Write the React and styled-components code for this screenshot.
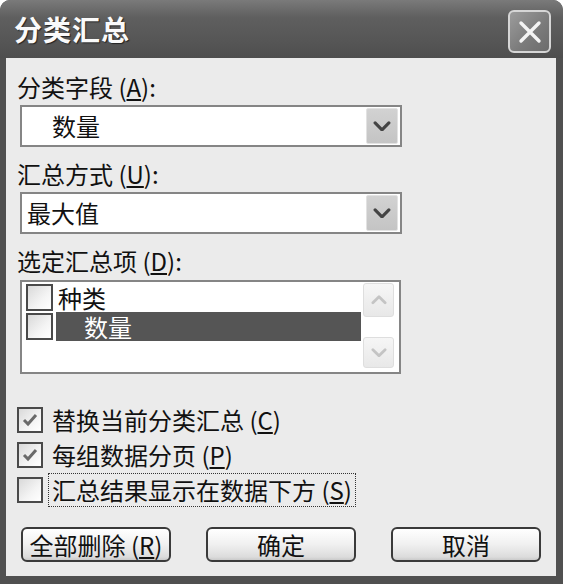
import React from 'react';
import styled, { createGlobalStyle } from 'styled-components';

const GlobalStyle = createGlobalStyle`
  html, body { margin: 0; padding: 0; background: #ffffff; }
  body { font-family: "Noto Sans CJK SC", "Noto Sans", sans-serif; color: #111; }
`;

const Window = styled.div`
  width: 563px;
  height: 584px;
  display: flex;
  flex-direction: column;
  background: #505050;
  border-radius: 10px 10px 0 0;
  overflow: hidden;
`;

const TitleBar = styled.div`
  height: 58px;
  flex: none;
  display: flex;
  align-items: flex-start;
  justify-content: space-between;
  padding: 0 12px 0 14px;
  background: linear-gradient(#7a7a7a 0%, #5f5f5f 30%, #565656 70%, #4e4e4e 100%);
`;

const Title = styled.div`
  margin-top: 12px;
  font-size: 28px;
  line-height: 34px;
  font-weight: 700;
  color: #fafafa;
  letter-spacing: 1px;
  text-shadow: 1px 1px 1px #222;
`;

const CloseButton = styled.div`
  margin-top: 10px;
  width: 43px;
  height: 43px;
  box-sizing: border-box;
  border: 2px solid #d6d6d6;
  border-radius: 6px;
  background: linear-gradient(135deg, #9c9c9c, #7a7a7a 60%, #6c6c6c);
  display: flex;
  align-items: center;
  justify-content: center;
`;

const Client = styled.div`
  flex: 1;
  margin: 0 7px 8px 6px;
  background: #ebebeb;
  padding: 15px 0 0 11px;
  display: flex;
  flex-direction: column;
  align-items: flex-start;
`;

const Label = styled.div`
  font-size: 24px;
  line-height: 28px;
  height: 28px;
  margin-top: ${p => p.$top || 0}px;
  white-space: nowrap;
`;

const Combo = styled.div`
  margin: 4px 0 0 3px;
  width: 382px;
  height: 42px;
  box-sizing: border-box;
  border: 2px solid #858585;
  background: #fff;
  display: flex;
  align-items: center;
  justify-content: space-between;
`;

const ComboText = styled.span`
  padding-left: ${p => p.$indent}px;
  font-size: 24px;
  line-height: 28px;
`;

const DropButton = styled.div`
  width: 32px;
  height: 36px;
  margin-right: 2px;
  box-sizing: border-box;
  border: 1px solid #e2e2e2;
  border-radius: 2px;
  background: linear-gradient(#d2d2d2, #c4c4c4);
  display: flex;
  align-items: center;
  justify-content: center;
`;

const ListBox = styled.div`
  margin: 5px 0 0 3px;
  width: 381px;
  height: 94px;
  box-sizing: border-box;
  border: 2px solid #858585;
  background: #fff;
  display: flex;
`;

const Items = styled.div`
  flex: 1;
  padding: 1px 2px 0 4px;
  display: flex;
  flex-direction: column;
`;

const ItemRow = styled.div`
  height: 29px;
  display: flex;
  align-items: center;
`;

const ItemText = styled.div`
  flex: 1;
  height: 29px;
  margin-left: 3px;
  padding-left: ${p => p.$indent}px;
  font-size: 24px;
  line-height: 29px;
  background: ${p => (p.$selected ? '#555555' : 'transparent')};
  color: ${p => (p.$selected ? '#ffffff' : '#111')};
`;

const ScrollBar = styled.div`
  width: 31px;
  margin-right: 5px;
  display: flex;
  flex-direction: column;
  justify-content: space-between;
  padding: 1px 0 4px;
`;

const ScrollButton = styled.div`
  height: ${p => p.$h}px;
  box-sizing: border-box;
  border: 1px solid #dedede;
  border-radius: 3px;
  background: linear-gradient(#f6f6f6, #e8e8e8);
  display: flex;
  align-items: center;
  justify-content: center;
`;

const Box = styled.div`
  width: ${p => p.$size}px;
  height: ${p => p.$size}px;
  flex: none;
  box-sizing: border-box;
  border: 2px solid #4a4a4a;
  background: linear-gradient(135deg, #d9d9d9, #f4f4f4 60%, #ffffff);
  display: flex;
  align-items: center;
  justify-content: center;
`;

const Options = styled.div`
  margin-top: 28px;
  display: flex;
  flex-direction: column;
`;

const OptionRow = styled.div`
  height: 35px;
  display: flex;
  align-items: center;
`;

const OptionText = styled.span`
  margin-left: 5px;
  padding: 2px 3px;
  border: 1px dotted ${p => (p.$focus ? '#333' : 'transparent')};
  font-size: 24px;
  line-height: 28px;
  white-space: nowrap;
`;

const ButtonRow = styled.div`
  margin: 20px 0 0 4px;
  display: flex;
  gap: 35px;
`;

const Button = styled.div`
  width: 150px;
  height: 35px;
  box-sizing: border-box;
  border: 2px solid #3a3a3a;
  border-radius: 6px;
  background: linear-gradient(#ffffff, #f0f0f0 50%, #dcdcdc 90%, #cacaca);
  display: flex;
  align-items: center;
  justify-content: center;
  font-size: 24px;
  line-height: 28px;
  white-space: nowrap;
`;

const Chevron = ({ up, color, size = 18 }) => (
  <svg width={size} height={size * 0.6} viewBox="0 0 18 11">
    <path
      d={up ? 'M2 9 L9 2 L16 9' : 'M2 2 L9 9 L16 2'}
      fill="none"
      stroke={color}
      strokeWidth="3.2"
      strokeLinecap="round"
      strokeLinejoin="round"
    />
  </svg>
);

const Check = () => (
  <svg width="16" height="14" viewBox="0 0 16 14">
    <path d="M2 7 L6 11 L14 2" fill="none" stroke="#6a6a6a" strokeWidth="3" />
  </svg>
);

const Key = ({ k }) => (
  <> (<u>{k}</u>)</>
);

const options = [
  { text: '替换当前分类汇总', key: 'C', checked: true },
  { text: '每组数据分页', key: 'P', checked: true },
  { text: '汇总结果显示在数据下方', key: 'S', checked: false, focus: true },
];

export default function App() {
  return (
    <>
      <GlobalStyle />
      <Window>
        <TitleBar>
          <Title>分类汇总</Title>
          <CloseButton>
            <svg width="24" height="24" viewBox="0 0 24 24">
              <path d="M3 3 L21 21 M21 3 L3 21" stroke="#f4f4f4" strokeWidth="3.4" strokeLinecap="round" />
            </svg>
          </CloseButton>
        </TitleBar>
        <Client>
          <Label>分类字段<Key k="A" />:</Label>
          <Combo>
            <ComboText $indent={30}>数量</ComboText>
            <DropButton><Chevron color="#444" /></DropButton>
          </Combo>
          <Label $top={13}>汇总方式<Key k="U" />:</Label>
          <Combo>
            <ComboText $indent={5}>最大值</ComboText>
            <DropButton><Chevron color="#444" /></DropButton>
          </Combo>
          <Label $top={13}>选定汇总项<Key k="D" />:</Label>
          <ListBox>
            <Items>
              <ItemRow>
                <Box $size={27} />
                <ItemText $indent={2}>种类</ItemText>
              </ItemRow>
              <ItemRow>
                <Box $size={27} />
                <ItemText $indent={28} $selected>数量</ItemText>
              </ItemRow>
            </Items>
            <ScrollBar>
              <ScrollButton $h={34}><Chevron up color="#c4c4c4" size={16} /></ScrollButton>
              <ScrollButton $h={31}><Chevron color="#c4c4c4" size={16} /></ScrollButton>
            </ScrollBar>
          </ListBox>
          <Options>
            {options.map(o => (
              <OptionRow key={o.key}>
                <Box $size={26}>{o.checked && <Check />}</Box>
                <OptionText $focus={o.focus}>{o.text}<Key k={o.key} /></OptionText>
              </OptionRow>
            ))}
          </Options>
          <ButtonRow>
            <Button>全部删除<Key k="R" /></Button>
            <Button>确定</Button>
            <Button>取消</Button>
          </ButtonRow>
        </Client>
      </Window>
    </>
  );
}
